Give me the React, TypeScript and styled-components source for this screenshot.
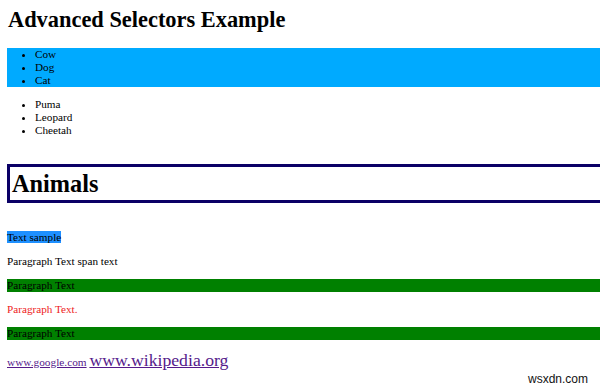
import styled, { createGlobalStyle } from "styled-components";

const GlobalStyle = createGlobalStyle`
  html, body {
    margin: 0;
    padding: 0;
    overflow: hidden;
    background: #ffffff;
  }
  body {
    font-family: "Liberation Serif", "Times New Roman", serif;
    color: #000000;
  }
`;

function App() {
  return (
    <>
      <GlobalStyle />
      <Page>
        <Title>Advanced Selectors Example</Title>
        <List $bg="#00aaff">
          <li>Cow</li>
          <li>Dog</li>
          <li>Cat</li>
        </List>
        <List $gap="11px">
          <li>Puma</li>
          <li>Leopard</li>
          <li>Cheetah</li>
        </List>
        <BoxedHeading>Animals</BoxedHeading>
        <Para $top="28px">
          <Highlight>Text sample</Highlight>
        </Para>
        <Para>
          Paragraph Text <span>span text</span>
        </Para>
        <Para $bg="#008000">Paragraph Text</Para>
        <Para $color="#ee1c1c">Paragraph Text.</Para>
        <Para $bg="#008000">Paragraph Text</Para>
        <Links>
          <Link href="#" $size="11.3px">
            www.google.com
          </Link>{" "}
          <Link href="#" $size="17.7px">
            www.wikipedia.org
          </Link>
        </Links>
      </Page>
      <Watermark>wsxdn.com</Watermark>
    </>
  );
}

const Page = styled.div`
  width: 620px;
  padding: 5px 0 0 7px;
  font-size: 11.2px;
  line-height: 13px;
`;

const Title = styled.h1`
  margin: 0 0 13px 1px;
  font-size: 22.4px;
  line-height: 30px;
  font-weight: bold;
`;

const List = styled.ul<{ $bg?: string; $gap?: string }>`
  margin: ${(p) => p.$gap || "0"} 0 0 0;
  padding: 0 0 0 28px;
  background: ${(p) => p.$bg || "transparent"};
  list-style: disc;
  li {
    line-height: 13px;
  }
`;

const BoxedHeading = styled.h1`
  margin: 27px 0 0 0;
  border: 3px solid #0a0066;
  padding: 0 0 0 2px;
  font-size: 24.3px;
  line-height: 33px;
  font-weight: bold;
`;

const Para = styled.p<{ $bg?: string; $color?: string; $top?: string }>`
  margin: ${(p) => p.$top || "11px"} 0 0 0;
  background: ${(p) => p.$bg || "transparent"};
  color: ${(p) => p.$color || "#000000"};
`;

const Highlight = styled.span`
  background: #1e90ff;
`;

const Links = styled.p`
  margin: 8px 0 0 0;
  line-height: 24px;
`;

const Link = styled.a<{ $size: string }>`
  font-size: ${(p) => p.$size};
  color: #551a8b;
`;

const Watermark = styled.div`
  position: absolute;
  right: 12px;
  bottom: 6px;
  font-family: "Liberation Sans", Arial, sans-serif;
  font-size: 12px;
  color: #111111;
`;

export default App;
